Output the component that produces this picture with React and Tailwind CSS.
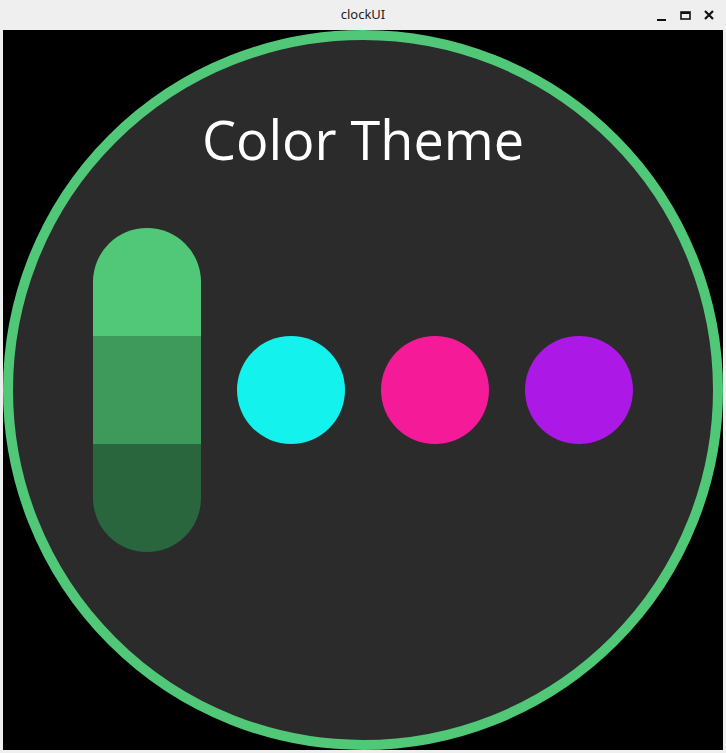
export default function App() {
  const swatches = ['#14f2ee', '#f41a98', '#ac18e5']

  return (
    <div className="w-[726px] h-[753px] bg-[#efefef] flex flex-col font-['Open_Sans',sans-serif]">
      {/* window title bar */}
      <div className="h-[30px] flex items-center relative shrink-0">
        <div className="flex-1 text-center text-[13px] text-[#222] font-['Noto_Sans',sans-serif]">
          clockUI
        </div>
        <div className="absolute right-[12px] top-0 h-[30px] flex items-center gap-[13px]">
          <svg width="10" height="20" viewBox="0 0 10 20">
            <rect x="0" y="14" width="9" height="2" fill="#111" />
          </svg>
          <svg width="11" height="20" viewBox="0 0 11 20">
            <rect x="1" y="7" width="9" height="7" fill="none" stroke="#111" strokeWidth="1.6" />
            <rect x="1" y="7" width="9" height="2" fill="#111" />
          </svg>
          <svg width="10" height="20" viewBox="0 0 10 20">
            <path d="M1 6 L9 14 M9 6 L1 14" stroke="#111" strokeWidth="2.2" />
          </svg>
        </div>
      </div>

      {/* clock face */}
      <div className="px-[3px] pb-[3px]">
        <div className="w-[720px] h-[720px] bg-black">
          <div className="w-full h-full rounded-full border-[10px] border-[#50c878] bg-[#2b2b2b] flex flex-col items-center pt-[72px]">
            <h1 className="h-[54px] leading-[54px] text-[54px] text-white">Color Theme</h1>

            <div className="mt-[62px] flex items-center gap-[36px]">
              <div className="w-[108px] h-[324px] rounded-full overflow-hidden flex flex-col">
                <div className="h-[108px] bg-[#50c878]" />
                <div className="h-[108px] bg-[#3d9a5b]" />
                <div className="h-[108px] bg-[#29663d]" />
              </div>
              {swatches.map((c) => (
                <div key={c} className="w-[108px] h-[108px] rounded-full" style={{ backgroundColor: c }} />
              ))}
            </div>
          </div>
        </div>
      </div>
    </div>
  )
}
